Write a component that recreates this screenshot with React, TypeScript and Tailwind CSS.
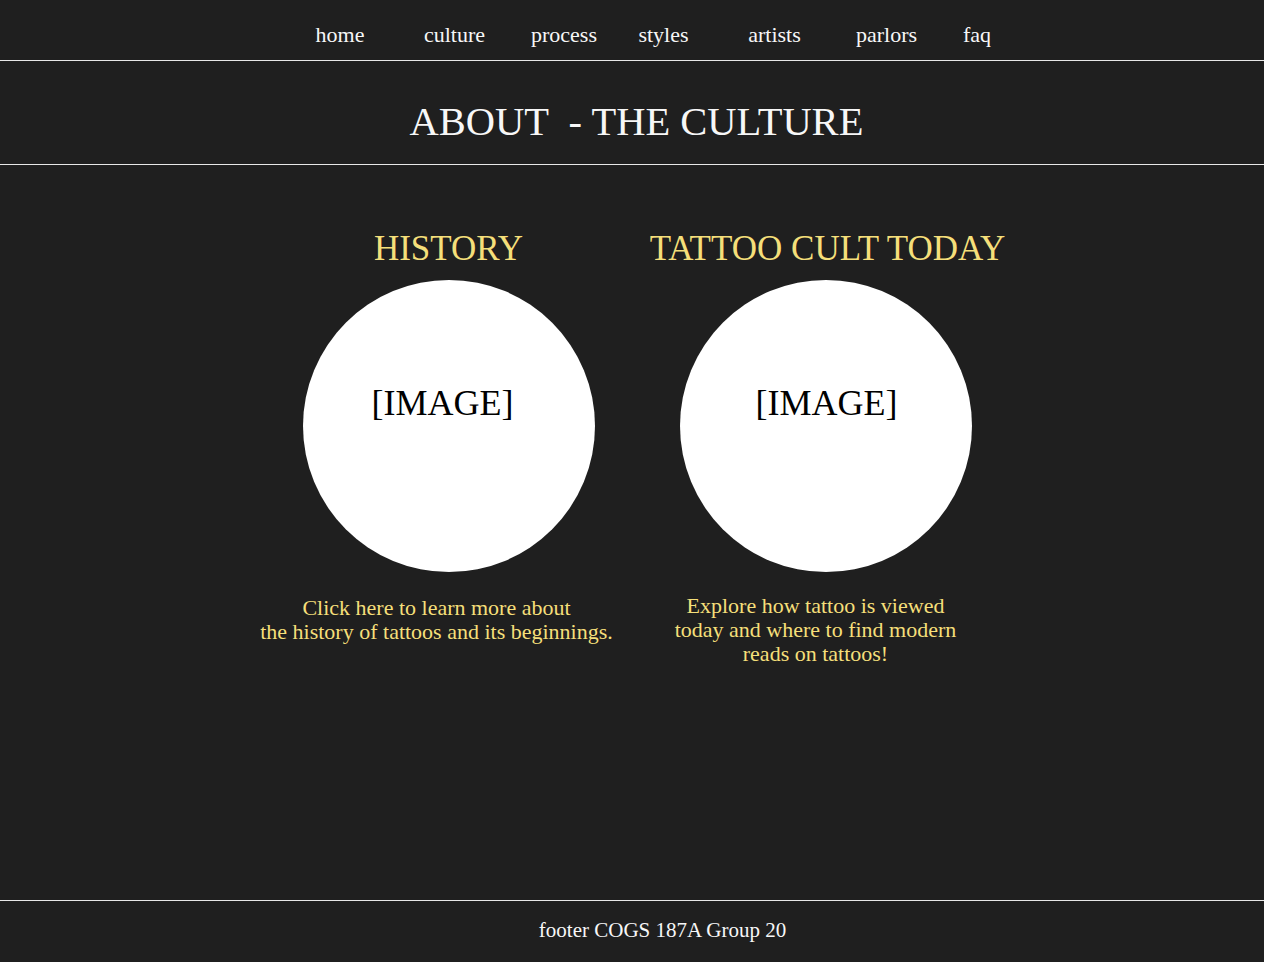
import React from 'react';

const NAV: { label: string; width: string }[] = [
  { label: 'home', width: 'w-[114px]' },
  { label: 'culture', width: 'w-[115px]' },
  { label: 'process', width: 'w-[104px]' },
  { label: 'styles', width: 'w-[95px]' },
  { label: 'artists', width: 'w-[127px]' },
  { label: 'parlors', width: 'w-[97px]' },
  { label: 'faq', width: 'w-[84px]' },
];

const SERIF = "font-['Liberation_Serif',Georgia,serif]";

function Topic({ title, lines, right }: { title: string; lines: string[]; right?: boolean }) {
  return (
    <div className="w-[379px] flex flex-col items-center">
      <h2 className="text-[35px] leading-[40px] text-[#f5df7a] whitespace-nowrap">{title}</h2>

      {/* image placeholder */}
      <div
        className={`mt-[11px] w-[292px] h-[292px] rounded-full bg-white flex justify-center pt-[105px] ${right ? 'mr-[4px]' : ''}`}
      >
        <span className={`text-[36px] leading-none text-black ${right ? 'pl-[2px]' : 'pr-[12px]'}`}>[IMAGE]</span>
      </div>

      <div className={`${right ? 'mt-[22px]' : 'mt-[24px]'} pr-[24px] text-center text-[22px] leading-6 text-[#f5df7a]`}>
        {lines.map(l => (
          <p key={l} className="whitespace-nowrap">{l}</p>
        ))}
      </div>
    </div>
  );
}

export default function App() {
  return (
    <div className={`min-h-screen bg-[#1f1f1f] text-[#f7f7f7] flex flex-col ${SERIF}`}>

      {/* Nav */}
      <nav className="h-[61px] border-b border-[#e8e8e8] flex justify-center items-center pt-[10px]">
        <div className="flex ml-[38px]">
          {NAV.map(item => (
            <a key={item.label} className={`${item.width} text-center text-[22px] leading-none cursor-pointer`}>
              {item.label}
            </a>
          ))}
        </div>
      </nav>

      {/* Title */}
      <header className="h-[104px] border-b border-[#e8e8e8] flex justify-center items-center pt-[20px]">
        <h1 className="ml-[9px] text-[40.5px] leading-none whitespace-pre">ABOUT  - THE CULTURE</h1>
      </header>

      {/* Topics */}
      <main className="flex-1 pt-[64px] pb-[40px]">
        <div className="flex pl-[259px]">
          <Topic
            title="HISTORY"
            lines={['Click here to learn more about', 'the history of tattoos and its beginnings.']}
          />
          <Topic
            right
            title="TATTOO CULT TODAY"
            lines={['Explore how tattoo is viewed', 'today and where to find modern', 'reads on tattoos!']}
          />
        </div>
      </main>

      {/* Footer */}
      <footer className="h-[62px] border-t border-[#e8e8e8] flex justify-center items-center pb-[2px]">
        <p className="ml-[61px] text-[21px] leading-none">footer COGS 187A Group 20</p>
      </footer>

    </div>
  );
}
